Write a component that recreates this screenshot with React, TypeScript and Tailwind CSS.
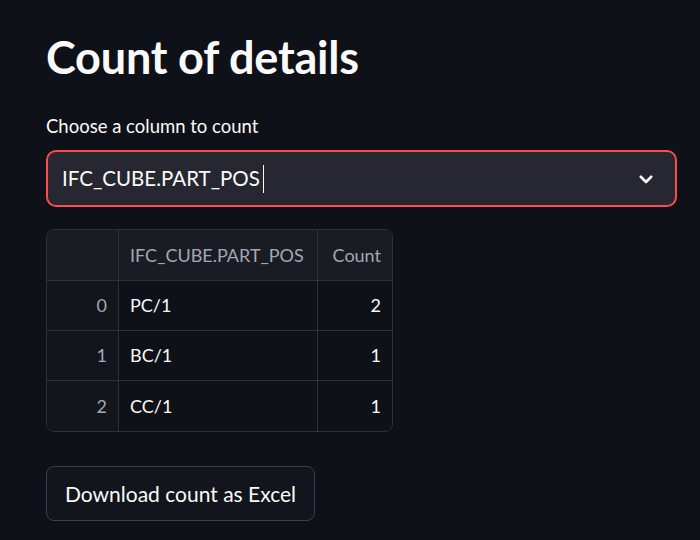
import React from 'react';

const rows = [
  { idx: 0, pos: 'PC/1', count: 2 },
  { idx: 1, pos: 'BC/1', count: 1 },
  { idx: 2, pos: 'CC/1', count: 1 },
];

export default function App() {
  return (
    <div
      className="w-[700px] h-[540px] overflow-hidden bg-[#0e1117] text-[#fafafa] pl-[46px] pr-[23px] pt-[31px]"
      style={{ fontFamily: 'Lato, "Noto Sans", sans-serif' }}
    >
      {/* Title */}
      <h1 className="text-[45px] font-bold leading-[52px] tracking-[-0.2px]">Count of details</h1>

      {/* Select */}
      <div className="mt-[31px] text-[18.5px] leading-[24px]">Choose a column to count</div>
      <div className="mt-[12px] h-[57px] rounded-[10px] border-2 border-[#ff4b4b] bg-[#262730] flex items-center pl-[14px] pr-[20px]">
        <span className="text-[20.5px]">IFC_CUBE.PART_POS</span>
        <span className="ml-[3px] w-[1.5px] h-[28px] bg-[#fafafa]" />
        <svg className="ml-auto" width="18" height="18" viewBox="0 0 24 24" fill="none">
          <path d="M5 9l7 7 7-7" stroke="#fafafa" strokeWidth="3.5" strokeLinecap="round" strokeLinejoin="round" />
        </svg>
      </div>

      {/* Table */}
      <div className="mt-[22px] w-[347px] rounded-[8px] border border-[#2f3038] overflow-hidden text-[18px]">
        <div className="grid grid-cols-[72px_199px_1fr] h-[51px] bg-[#1a1c24] text-[#a3a8b4] border-b border-[#2f3038]">
          <div className="border-r border-[#2f3038]" />
          <div className="border-r border-[#2f3038] flex items-center px-[11px]">IFC_CUBE.PART_POS</div>
          <div className="flex items-center justify-end px-[11px]">Count</div>
        </div>
        {rows.map((r, i) => (
          <div
            key={r.idx}
            className={`grid grid-cols-[72px_199px_1fr] h-[50px] ${i < rows.length - 1 ? 'border-b border-[#2f3038]' : ''}`}
          >
            <div className="border-r border-[#2f3038] bg-[#13151c] text-[#a3a8b4] flex items-center justify-end px-[11px]">
              {r.idx}
            </div>
            <div className="border-r border-[#2f3038] bg-[#0e1117] flex items-center px-[11px]">{r.pos}</div>
            <div className="bg-[#0e1117] flex items-center justify-end px-[11px]">{r.count}</div>
          </div>
        ))}
      </div>

      {/* Download button */}
      <button className="mt-[34px] h-[55px] px-[18px] rounded-[8px] border border-[#3d3f49] bg-[#12151c] text-[21px] text-[#fafafa]">
        Download count as Excel
      </button>
    </div>
  );
}
